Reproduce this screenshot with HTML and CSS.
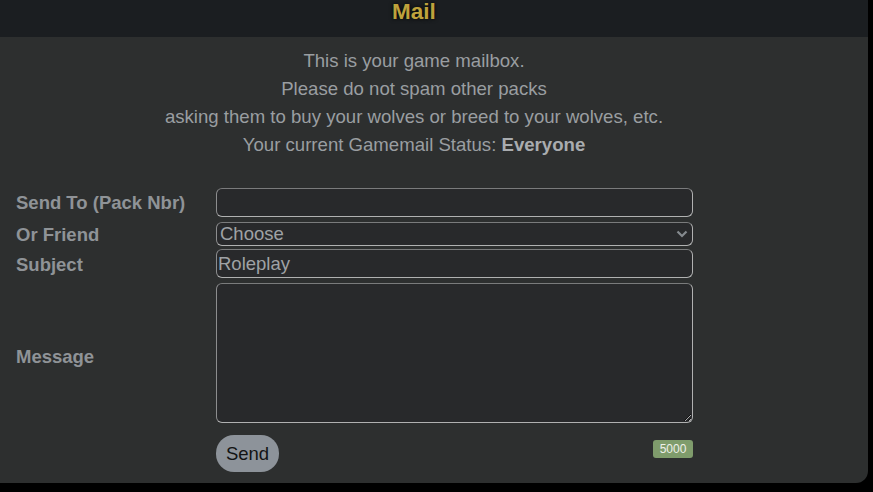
FILE: index.html
```html
<!DOCTYPE html>
<html>
<head>
<meta charset="utf-8">
<link rel="stylesheet" href="styles.css">
</head>
<body>
<div class="panel">
  <div class="header"><h1 class="title">Mail</h1></div>
  <div class="intro">
    <p>This is your game mailbox.</p>
    <p>Please do not spam other packs</p>
    <p>asking them to buy your wolves or breed to your wolves, etc.</p>
    <p>Your current Gamemail Status: <b>Everyone</b></p>
  </div>
  <form class="form">
    <label class="lbl">Send To (Pack Nbr)</label>
    <input class="field text" type="text">
    <label class="lbl lbl-low">Or Friend</label>
    <select class="field select"><option>Choose</option></select>
    <label class="lbl lbl-low">Subject</label>
    <input class="field text" type="text" value="Roleplay">
    <label class="lbl lbl-msg">Message</label>
    <textarea class="field area"></textarea>
    <span></span>
    <div class="actions">
      <button class="send" type="button">Send</button>
      <span class="count">5000</span>
    </div>
  </form>
</div>
</body>
</html>
```
FILE: styles.css
```css
html, body { margin: 0; padding: 0; background: #000; }
body { font-family: "Liberation Sans", Arial, sans-serif; }
.panel {
  width: 868px;
  height: 483px;
  background: #2d2f2f;
  border-bottom-right-radius: 12px;
  overflow: hidden;
}
.header {
  height: 37px;
  background: #1b1e21;
  padding-right: 40px;
  text-align: center;
}
.title {
  margin: 0;
  font-size: 22.5px;
  line-height: 24px;
  font-weight: bold;
  color: #bea23c;
  text-shadow: 0 0 4px #000;
}
.intro {
  margin-top: 10px;
  padding-right: 40px;
  text-align: center;
  color: #9a9ea1;
  font-size: 18.6px;
}
.intro p { margin: 0; line-height: 28px; }
.intro b { color: #a9acaf; }
.form {
  margin-top: 29px;
  padding-left: 16px;
  display: grid;
  grid-template-columns: 200px 477px;
  grid-template-rows: 29px 24px 29px 140px auto;
  row-gap: 4px;
  align-items: center;
}
.lbl {
  font-size: 18.5px;
  font-weight: bold;
  color: #8f9397;
  line-height: 22px;
}
.lbl-low { padding-top: 3px; }
.lbl-msg { padding-top: 9px; }
.field {
  box-sizing: border-box;
  width: 477px;
  margin: 0;
  background: #28292b;
  border: 1px solid #b0b1b1;
  border-top-color: #7a7b7c;
  border-left-color: #8c8d8e;
  border-radius: 6px;
  font-family: "Liberation Sans", Arial, sans-serif;
  font-size: 18.5px;
  color: #9fa2a5;
  outline: none;
}
.text { height: 29px; padding: 0 1px; }
.select {
  height: 24px;
  padding: 0 0 0 3px;
  -webkit-appearance: none;
  appearance: none;
  background-image: url("data:image/svg+xml,%3Csvg xmlns='http://www.w3.org/2000/svg' width='12' height='8' viewBox='0 0 12 8'%3E%3Cpath d='M1.5 1.5 6 6l4.5-4.5' fill='none' stroke='%23858a8f' stroke-width='2.2'/%3E%3C/svg%3E");
  background-repeat: no-repeat;
  background-position: right 4px center;
  margin-top: 1px;
}
.area { height: 140px; resize: vertical; padding: 2px; margin-top: 1px; }
.actions {
  margin-top: 9px;
  display: flex;
  justify-content: space-between;
  align-items: flex-start;
}
.send {
  width: 63px;
  height: 37px;
  border: none;
  border-radius: 18px;
  background: #8d939a;
  color: #121314;
  font-family: "Liberation Sans", Arial, sans-serif;
  font-size: 18.5px;
  padding: 0;
}
.count {
  margin-top: 5px;
  width: 40px;
  height: 18px;
  line-height: 18px;
  text-align: center;
  background: #7f9c6c;
  color: #eef0ea;
  font-size: 12px;
  border-radius: 3px;
}
```
